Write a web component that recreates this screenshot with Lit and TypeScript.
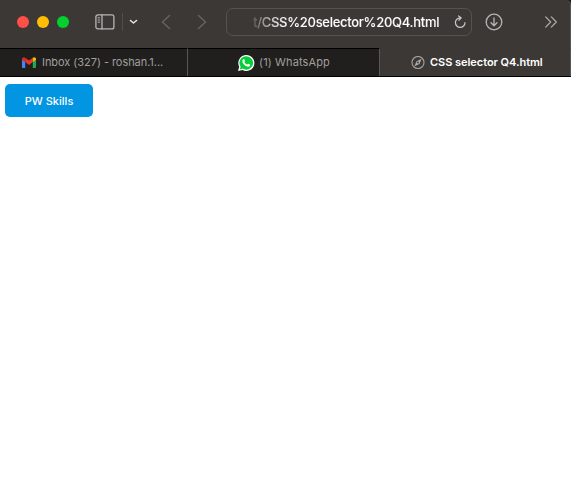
import { LitElement, html, css } from "lit";
import { customElement } from "lit/decorators.js";

@customElement("browser-toolbar")
class BrowserToolbar extends LitElement {
  static styles = css`
    :host { display: flex; box-sizing: border-box; height: 48px; padding: 0 0 4px 17px; align-items: center; background: #3c3836; border-right: 1px solid #5a5755; border-top-right-radius: 5px; }
    svg { display: block; flex: none; fill: none; stroke-linecap: round; stroke-linejoin: round; }
    .light { width: 12px; height: 12px; margin-right: 8px; border-radius: 50%; flex: none; }
    .red { background: #ff4f46; }
    .yellow { background: #ffbd04; }
    .green { background: #03d02f; }
    .sidebar { margin-left: 18px; stroke: #b7b5b4; }
    .rule { width: 1px; height: 18px; margin-left: 7px; background: #514e4c; }
    .menu { margin-left: 6px; stroke: #e5e4e4; }
    .nav { stroke: #686462; }
    .back { margin-left: 23px; }
    .next { margin-left: 25px; }
    .address { display: flex; align-items: center; box-sizing: border-box; width: 246px; height: 28px; margin: 0 0 1px 18px; padding: 1px 5px 0 26px; border: 1px solid #56524f; border-radius: 7px; flex: none; }
    .url { width: 188px; margin-right: 13px; flex: none; white-space: nowrap; font: 500 13px/18px Inter, sans-serif; letter-spacing: -.28px; color: transparent; background: linear-gradient(90deg, #5a5654 0, #8d8a88 8px, #d4d3d2 20px, #fff 34px); -webkit-background-clip: text; background-clip: text; -webkit-text-stroke: .15px transparent; }
    .reload { stroke: #c9c7c6; }
    .download { margin-left: 13px; stroke: #b7b5b4; }
    .more { margin-left: 41px; stroke: #b0aeac; }
  `;
  render() {
    return html`
      <span class="light red"></span><span class="light yellow"></span><span class="light green"></span>
      <svg class="sidebar" width="20" height="16" viewBox="0 0 20 16" stroke-width="1.3"><rect x=".9" y=".9" width="18" height="14" rx="2"/><path d="M7 1v14"/><path d="M3 3.8h1.7M3 6h1.7M3 8.2h1.7" stroke-width="1"/></svg>
      <span class="rule"></span>
      <svg class="menu" width="9" height="6" viewBox="0 0 9 6" stroke-width="1.6"><path d="M1.5 1.5l3 2.5 3-2.5"/></svg>
      <svg class="nav back" width="10" height="16" viewBox="0 0 10 16" stroke-width="1.4"><path d="M8.5 1.5L1.5 8l7 6.5"/></svg>
      <svg class="nav next" width="12" height="16" viewBox="0 0 12 16" stroke-width="1.4"><path d="M2.5 1.5l7 6.5-7 6.5"/></svg>
      <div class="address">
        <span class="url">t/CSS%20selector%20Q4.html</span>
        <svg class="reload" width="12" height="14" viewBox="0 0 12 14" stroke-width="1.2"><path d="M6.2 2.8a4.8 4.8 0 1 0 4.8 4.8M4.6 .9l2.7 2-2.5 2.3"/></svg>
      </div>
      <svg class="download" width="18" height="18" viewBox="0 0 18 18" stroke-width="1.3"><circle cx="9" cy="9" r="7.8"/><path d="M9 5v7.6M6 9.8l3 3 3-3"/></svg>
      <svg class="more" width="14" height="12" viewBox="0 0 14 12" stroke-width="1.2"><path d="M1.7 .9l5 5.1-5 5.1M7.3 .9l5 5.1-5 5.1"/></svg>
    `;
  }
}

@customElement("browser-tabs")
class BrowserTabs extends LitElement {
  static styles = css`
    :host { display: flex; height: 29px; box-sizing: border-box; border-bottom: 1px solid #000; background: #3c3836; font: 400 11px/16px Inter, sans-serif; color: #a09e9d; white-space: nowrap; }
    .tab { display: flex; align-items: center; box-sizing: border-box; border-top: 1px solid #000; border-right: 1px solid #5a5755; background: #201f1d; }
    svg { display: block; flex: none; }
    span { padding-bottom: 1px; }
    .mail { width: 188px; padding-left: 22px; gap: 6px; }
    .mail span { letter-spacing: -.05px; }
    .chat { width: 192px; padding-left: 49px; gap: 4px; }
    .chat span { letter-spacing: .12px; }
    .current { flex: 1; padding-left: 31px; gap: 5px; background: #3c3836; border-top-color: transparent; color: #fff; font-weight: 600; }
    .current span { letter-spacing: -.04px; }
  `;
  render() {
    return html`
      <div class="tab mail">
        <svg width="14" height="11" viewBox="0 0 14 11"><path fill="#4285f4" d="M0 2l3.2 2.4V11H1a1 1 0 0 1-1-1z"/><path fill="#20a850" d="M14 2l-3.2 2.4V11H13a1 1 0 0 0 1-1z"/><path fill="#ea3526" d="M3.2.7L7 3.6 10.8.7v4.4L7 8 3.2 5.1z"/><path fill="#d92a21" d="M0 2C0 .3 1.9-.4 3.2.7v4.4L0 2.7z"/><path fill="#fbbc04" d="M14 2c0-1.7-1.9-2.4-3.2-1.3v4.4L14 2.7z"/></svg>
        <span>Inbox (327) - roshan.1...</span>
      </div>
      <div class="tab chat">
        <svg width="18" height="18" viewBox="0 0 18 18"><path fill="#fff" d="M9.2 1a8 8 0 1 1-3.7 15L1 17l1.200-4.300A8 8 0 0 1 9.200 1z"/><path fill="#05cf38" d="M9.200 2.300a6.700 6.700 0 1 1-3.500 12.300l-2.900.8.8-2.700A6.700 6.700 0 0 1 9.200 2.300z"/><path fill="#fff" d="M6.300 5.200c.5-.4.900-.3 1.100.2l.6 1.400c.1.400-.5.900-.7 1.200.7 1.300 1.500 2 2.800 2.600.4-.2.800-1 1.200-.9l1.600.8c.5.300.1 1.400-.4 1.800-1.400 1-3.500 0-5-1.300C5.900 9.500 4.300 7 6.300 5.200z"/></svg>
        <span>(1) WhatsApp</span>
      </div>
      <div class="tab current">
        <svg width="14" height="14" viewBox="0 0 14 14"><circle cx="7" cy="6.500" r="6" fill="none" stroke="#a5a2a1" stroke-width="1.100"/><path fill="#b0adac" fill-rule="evenodd" d="M10.600 2.700L8.500 7.900 3.400 10.300 5.600 5.200zM7 5.600a.9.9 0 1 0 0 1.800.9.9 0 0 0 0-1.800z"/></svg>
        <span>CSS selector Q4.html</span>
      </div>
    `;
  }
}

@customElement("app-root")
class AppRoot extends LitElement {
  static styles = css`
    :host { display: block; height: 495px; overflow: hidden; background: #fff; }
    .chrome { background: #17181c; }
    .page { padding: 7px 5px; }
    button { display: block; width: 88px; height: 33px; padding: 1px 0 0; border: 0; border-radius: 5px; background: #0295e2; color: #fff; font: 500 11px/32px Inter, sans-serif; letter-spacing: .02px; }
  `;
  render() {
    return html`
      <div class="chrome"><browser-toolbar></browser-toolbar><browser-tabs></browser-tabs></div>
      <main class="page"><button>PW Skills</button></main>
    `;
  }
}
